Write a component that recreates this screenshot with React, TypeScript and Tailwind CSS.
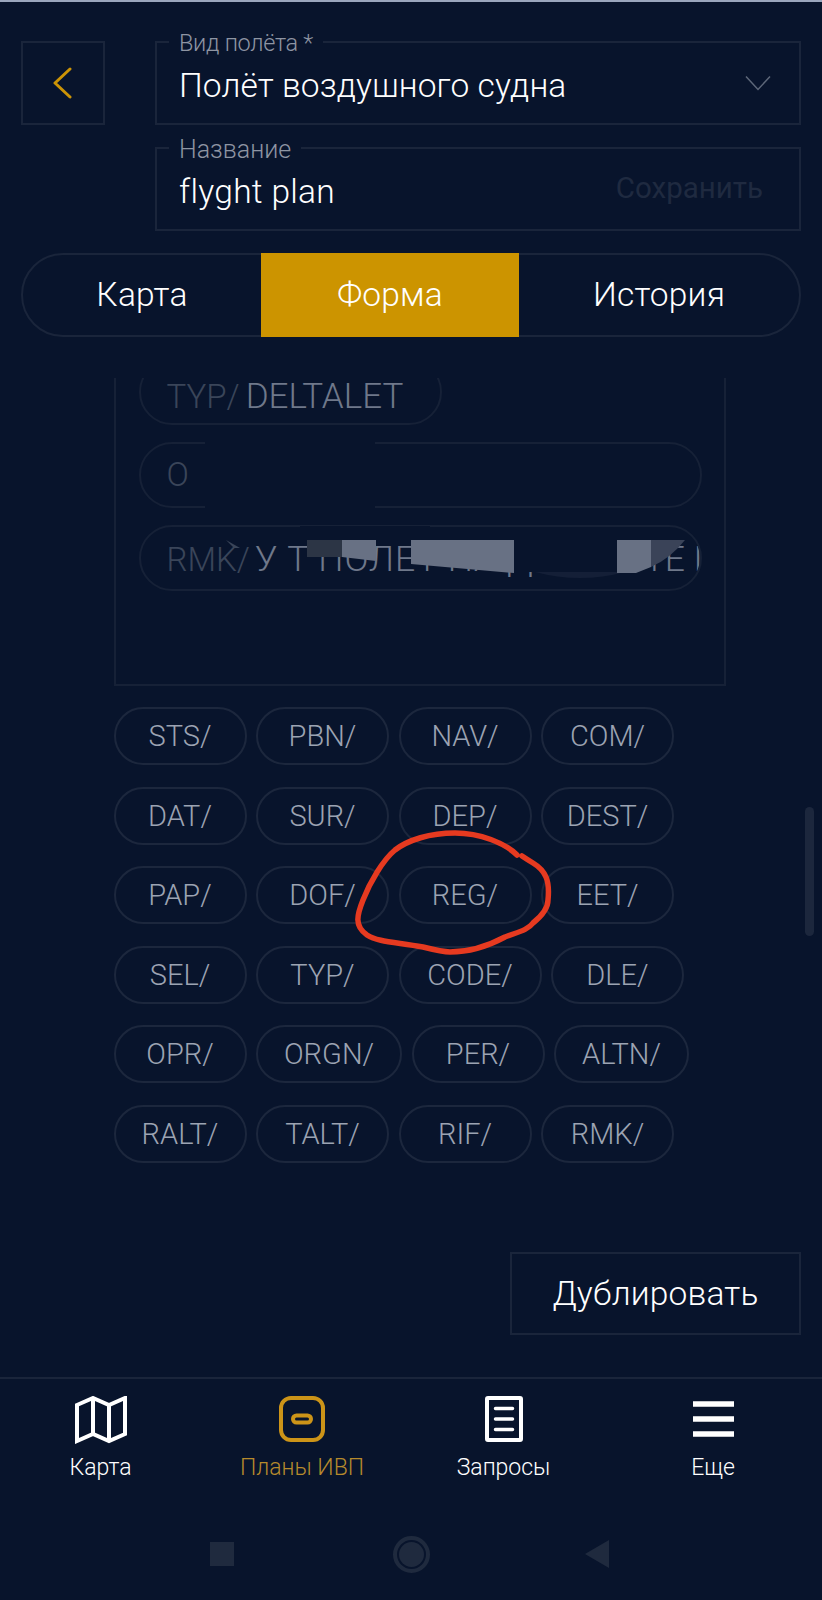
const F = { fontFamily: 'Roboto, "Noto Sans", sans-serif' };

const rows: [string, number][][] = [
  [["STS/", 133], ["PBN/", 133], ["NAV/", 133], ["COM/", 133]],
  [["DAT/", 133], ["SUR/", 133], ["DEP/", 133], ["DEST/", 133]],
  [["PAP/", 133], ["DOF/", 133], ["REG/", 133], ["EET/", 133]],
  [["SEL/", 133], ["TYP/", 133], ["CODE/", 143], ["DLE/", 133]],
  [["OPR/", 133], ["ORGN/", 146], ["PER/", 133], ["ALTN/", 135]],
  [["RALT/", 133], ["TALT/", 133], ["RIF/", 133], ["RMK/", 133]],
];

function Field({ label, labelClass, children }: { label: string; labelClass: string; children: React.ReactNode }) {
  return (
    <div className="relative h-[84px] border-2 border-[#1a253b] flex items-center justify-between pl-[22px] pr-[28px]">
      <span className={`absolute left-[12px] bg-[#08142c] px-[10px] leading-[26px] font-light text-[#8e95a3] ${labelClass}`}>{label}</span>
      {children}
    </div>
  );
}

export default function App() {
  return (
    <div style={F} className="relative w-[822px] h-[1600px] bg-[#08142c] overflow-hidden flex flex-col">
      <div className="h-[2px] bg-[#9aa6bd]" />
      <div className="flex gap-[50px] pl-[21px] pr-[21px] pt-[39px]">
        <button className="w-[84px] h-[84px] shrink-0 border-2 border-[#1a253b] flex items-center justify-center">
          <svg width="22" height="32" viewBox="0 0 22 32" fill="none" stroke="#cc9406" strokeWidth="3" strokeLinecap="round" strokeLinejoin="round">
            <path d="M18 2 3 16l15 14" />
          </svg>
        </button>
        <div className="flex-1 flex flex-col gap-[22px]">
          <Field label="Вид полёта *" labelClass="-top-[13px] text-[23.5px] tracking-[-0.3px]">
            <span className="text-[33.5px] font-light text-white tracking-[0.1px] pt-[7px]">Полёт воздушного судна</span>
            <svg width="26" height="16" viewBox="0 0 26 16" fill="none" stroke="#5d6779" strokeWidth="1.5">
              <path d="M1 1.5 13 14.5 25 1.5" />
            </svg>
          </Field>
          <Field label="Название" labelClass="-top-[12px] text-[25px]">
            <span className="text-[33.5px] font-light text-white tracking-[0.3px] pt-[7px]">flyght plan</span>
            <span className="text-[29.5px] text-[#1f2a40] mr-[8px] -mt-[2px]">Сохранить</span>
          </Field>
        </div>
      </div>

      <div className="mx-[21px] mt-[22px] h-[84px] border-2 border-[#1a253b] rounded-[42px] flex items-center text-[33.5px] font-light text-white tracking-[0.2px]">
        <div className="w-[238px] text-center">Карта</div>
        <div className="w-[258px] -my-[2px] h-[84px] bg-[#cc9400] flex items-center justify-center">Форма</div>
        <div className="flex-1 text-center">История</div>
      </div>

      {/* editor panel */}
      <div className="relative mt-[41px] ml-[113.5px] w-[612.5px] h-[308px] border-x-2 border-b-2 border-[#162137] overflow-hidden">
        <div className="pl-[23px] flex flex-col gap-[17px] text-[33px] font-light">
          <div className="h-[47px] overflow-hidden">
            <div className="-mt-[19px] h-[66px] w-[303px] rounded-[33px] border-2 border-[#162137] flex items-end pb-[7px] pl-[26px] whitespace-nowrap leading-[38px]">
              <span className="text-[#3a4559]">TYP/</span>
              <span className="text-[#6f788a] ml-[6px] text-[35px]">DELTALET</span>
            </div>
          </div>
          <div className="h-[66px] w-[563px] rounded-[33px] border-2 border-[#162137] flex items-center pl-[26px]">
            <span className="text-[#3a4559]">O</span>
          </div>
          <div className="relative h-[66px] w-[563px] rounded-[33px] border-2 border-[#162137] flex items-center pl-[26px] pt-[3px] whitespace-nowrap overflow-hidden">
            <span className="text-[#3a4559]">RMK/</span>
            <span className="text-[#6f788a] ml-[5px] text-[35.5px] tracking-[1px]">У Т ПОЛЕТ НА Д</span>
            <span className="text-[#6f788a] ml-[110px] text-[35.5px]">ТЕ П</span>
          </div>
        </div>
      </div>

      {/* tag chips */}
      <div className="ml-[113.5px] mt-[21px] flex flex-col gap-[21.5px]">
        {rows.map((row, i) => (
          <div key={i} className="flex gap-[9.5px]">
            {row.map(([t, w]) => (
              <div key={t} style={{ width: w }} className="h-[58px] rounded-[29px] border-2 border-[#1c273d] flex items-center justify-center pt-[2px] text-[29px] font-light text-[#9ca3b2]">
                {t}
              </div>
            ))}
          </div>
        ))}
      </div>

      <div className="flex justify-end pr-[21px] mt-[89px]">
        <button className="w-[291px] h-[83px] border-2 border-[#1a253b] flex items-center justify-center text-[33.5px] font-light text-white tracking-[0.2px] pt-[2px]">Дублировать</button>
      </div>

      {/* bottom navigation */}
      <div className="mt-[42px] border-t-2 border-[#1a253b] flex pt-[17px]">
        <div className="w-[201px] flex flex-col items-center">
          <svg width="52" height="48" viewBox="0 0 52 48" fill="none" stroke="#fff" strokeWidth="4" strokeLinejoin="miter">
            <path d="M2 9 18 2l16 7 16-7v36l-16 7-16-7-16 7z" />
            <path d="M18 2v36M34 9v36" />
          </svg>
          <span className="text-[23px] leading-[26px] mt-[11px] text-white font-light">Карта</span>
        </div>
        <div className="w-[202px] flex flex-col items-center">
          <svg className="mb-[2px]" width="46" height="46" viewBox="0 0 46 46" fill="none" stroke="#cc9418" strokeWidth="4">
            <rect x="2" y="2" width="42" height="42" rx="10" />
            <rect x="14" y="19.5" width="18" height="7" rx="3.5" />
          </svg>
          <span className="text-[23px] leading-[26px] mt-[11px] text-[#b68a2c] font-light">Планы ИВП</span>
        </div>
        <div className="w-[201px] flex flex-col items-center">
          <svg className="mb-[2px]" width="38" height="46" viewBox="0 0 38 46" fill="none" stroke="#fff" strokeWidth="4">
            <rect x="2" y="2" width="34" height="42" rx="1" />
            <path d="M10.5 12.5h17M10.5 23h17M10.5 33.5h17" strokeWidth="3.5" strokeLinecap="round" />
          </svg>
          <span className="text-[23px] leading-[26px] mt-[11px] text-white font-light">Запросы</span>
        </div>
        <div className="flex-1 flex flex-col items-center">
          <svg className="mb-[2px]" width="41" height="46" viewBox="0 0 41 46" fill="none" stroke="#fff" strokeWidth="5.3">
            <path d="M0 8h41M0 23h41M0 38h41" />
          </svg>
          <span className="text-[23px] leading-[26px] mt-[11px] text-white font-light">Еще</span>
        </div>
      </div>

      {/* android bar */}
      <div className="flex items-center pl-[210px] mt-[55px]">
        <div className="w-[24px] h-[24px] bg-[#1f2a3e]" />
        <div className="ml-[159px] w-[37px] h-[37px] rounded-full border-[4px] border-[#1f2a3e] flex items-center justify-center">
          <div className="w-[25px] h-[25px] rounded-full bg-[#1f2a3e]" />
        </div>
        <svg className="ml-[155px]" width="24" height="28" viewBox="0 0 24 28" fill="#1f2a3e">
          <path d="M24 0v28L0 14z" />
        </svg>
      </div>

      {/* scrollbar */}
      <div className="absolute left-[805px] top-[807px] w-[9px] h-[129px] rounded-full bg-[#1c273d]" />

      {/* redaction patches */}
      <svg className="absolute left-0 top-0 pointer-events-none" width="822" height="1600">
        <path d="M205 442h170v66H205z" fill="#08142c" />
        <path d="M300 526h130v14H300zM514 540h103v32h-103z" fill="#08142c" />
        <path d="M535 572q45 12 90 0l-8 0h-82z" fill="#141f37" />
        <path d="M226 540l14 8-6 0z" fill="#3a4559" />
        <path d="M307 540h35v17h-35z" fill="#2c3545" />
        <path d="M342 540h34v21l-34-4z" fill="#687184" />
        <path d="M411 540h103v33l-103-9z" fill="#687184" />
        <path d="M617 540h34v27l-15 6h-19z" fill="#687184" />
        <path d="M651 540h34q-14 18-34 27z" fill="#3a4358" />
      </svg>

      {/* red hand-drawn circle */}
      <svg className="absolute left-0 top-0 pointer-events-none" width="822" height="1600" fill="none" stroke="#e63a20" strokeWidth="5.5" strokeLinecap="round" strokeLinejoin="round">
        <path d="M517 855C505 843 480 833 455 833C430 833 408 840 395 850C383 860 370 882 363 900C357 915 354 926 367 935C378 942 395 942 423 947C435 950 443 952 450 952C470 952 490 945 505 937C518 932 528 930 533 923C543 915 548 908 548 900C549 890 549 884 546 877C543 870 538 866 533 863C528 860 525 858 522 856" />
      </svg>
    </div>
  );
}
